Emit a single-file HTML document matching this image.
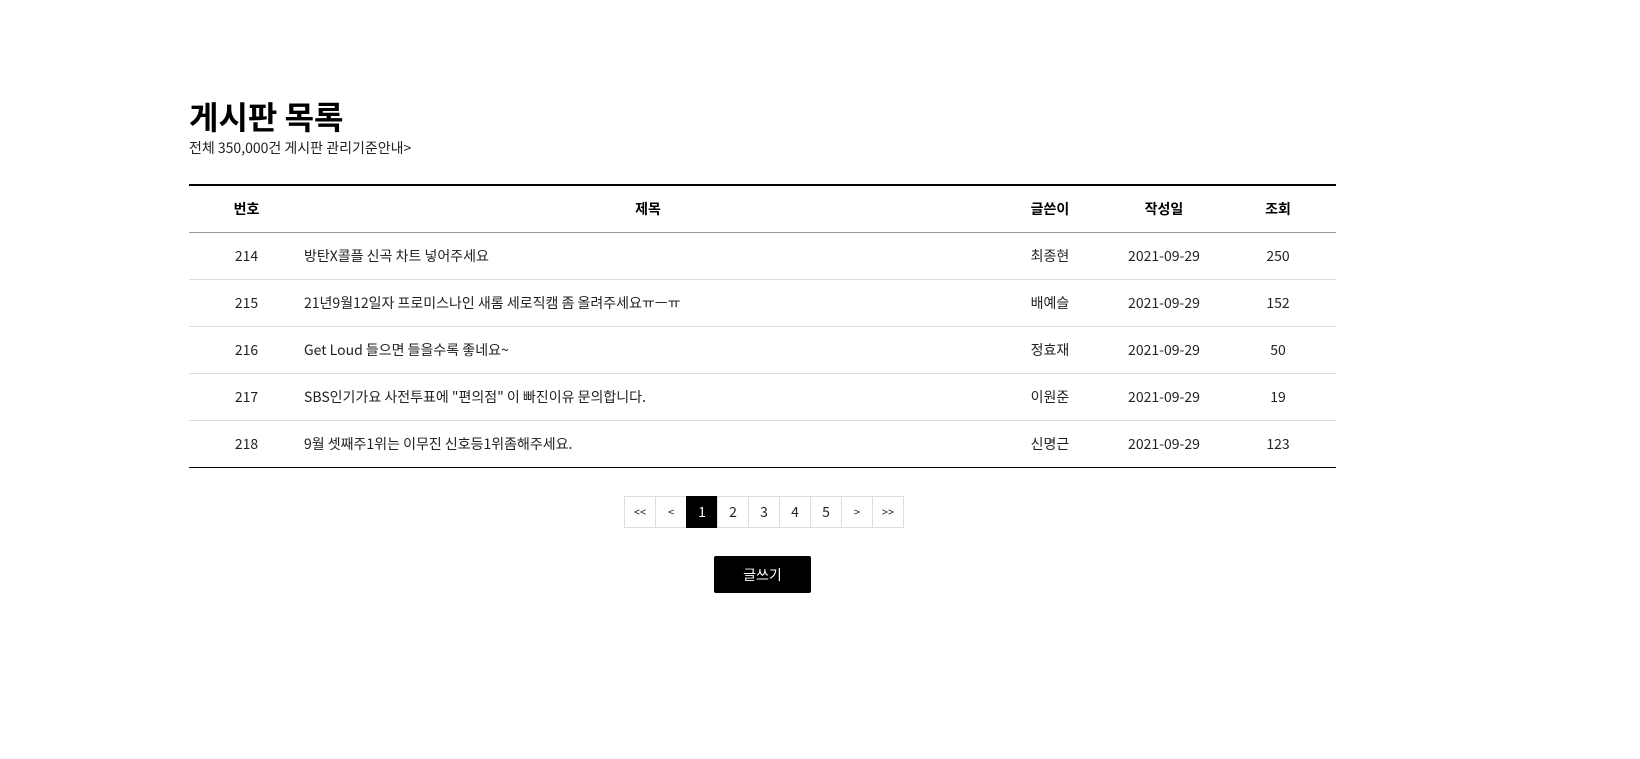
<!DOCTYPE html>
<html><head><meta charset="utf-8"><style>
body{margin:0;background:#fff;font-family:"Noto Sans CJK KR","Liberation Sans",sans-serif;color:#000;}
.wrap{position:absolute;left:189px;top:0;width:1147px;}
h1{position:absolute;top:96px;left:0;margin:0;font-size:32px;font-weight:bold;line-height:40px;white-space:nowrap}
.sub{position:absolute;top:138px;left:0;font-size:14px;line-height:20px;color:#222;white-space:nowrap}
table{position:absolute;top:184px;left:0;width:1147px;border-collapse:collapse;font-size:14px;table-layout:fixed;line-height:20px}
thead tr{border-top:2px solid #000;border-bottom:1px solid #999}
th{height:46px;font-weight:bold;text-align:center;padding:0}
td{height:46px;text-align:center;border-bottom:1px solid #ddd;color:#222;padding:0}
td.t{text-align:left}
tbody tr:last-child td{border-bottom:1px solid #000}
.pg{position:absolute;top:496px;left:625px;display:flex}
.pg span{width:30px;height:30px;border:1px solid #ddd;margin-left:-1px;display:flex;align-items:center;justify-content:center;font-size:14px;color:#222}
.pg span.s{font-size:11px}
.pg span.on{background:#000;color:#fff;border-color:#000}
.btn{position:absolute;left:714px;top:556px;width:97px;height:37px;background:#000;color:#fff;font-size:14px;display:flex;align-items:center;justify-content:center;border-radius:2px}
</style></head><body>
<div class="wrap">
<h1>게시판 목록</h1>
<div class="sub">전체 350,000건 게시판 관리기준안내&gt;</div>
<table>
<colgroup><col style="width:115px"><col style="width:688px"><col style="width:116px"><col style="width:112px"><col style="width:116px"></colgroup>
<thead><tr><th>번호</th><th>제목</th><th>글쓴이</th><th>작성일</th><th>조회</th></tr></thead>
<tbody>
<tr><td>214</td><td class="t">방탄X콜플 신곡 차트 넣어주세요</td><td>최종현</td><td>2021-09-29</td><td>250</td></tr>
<tr><td>215</td><td class="t">21년9월12일자 프로미스나인 새롬 세로직캠 좀 올려주세요ㅠㅡㅠ</td><td>배예슬</td><td>2021-09-29</td><td>152</td></tr>
<tr><td>216</td><td class="t">Get Loud 들으면 들을수록 좋네요~</td><td>정효재</td><td>2021-09-29</td><td>50</td></tr>
<tr><td>217</td><td class="t">SBS인기가요 사전투표에 "편의점" 이 빠진이유 문의합니다.</td><td>이원준</td><td>2021-09-29</td><td>19</td></tr>
<tr><td>218</td><td class="t">9월 셋째주1위는 이무진 신호등1위좀해주세요.</td><td>신명근</td><td>2021-09-29</td><td>123</td></tr>
</tbody></table>
</div>
<div class="pg"><span class="s">&lt;&lt;</span><span class="s">&lt;</span><span class="on">1</span><span>2</span><span>3</span><span>4</span><span>5</span><span class="s">&gt;</span><span class="s">&gt;&gt;</span></div>
<div class="btn">글쓰기</div>
</body></html>
